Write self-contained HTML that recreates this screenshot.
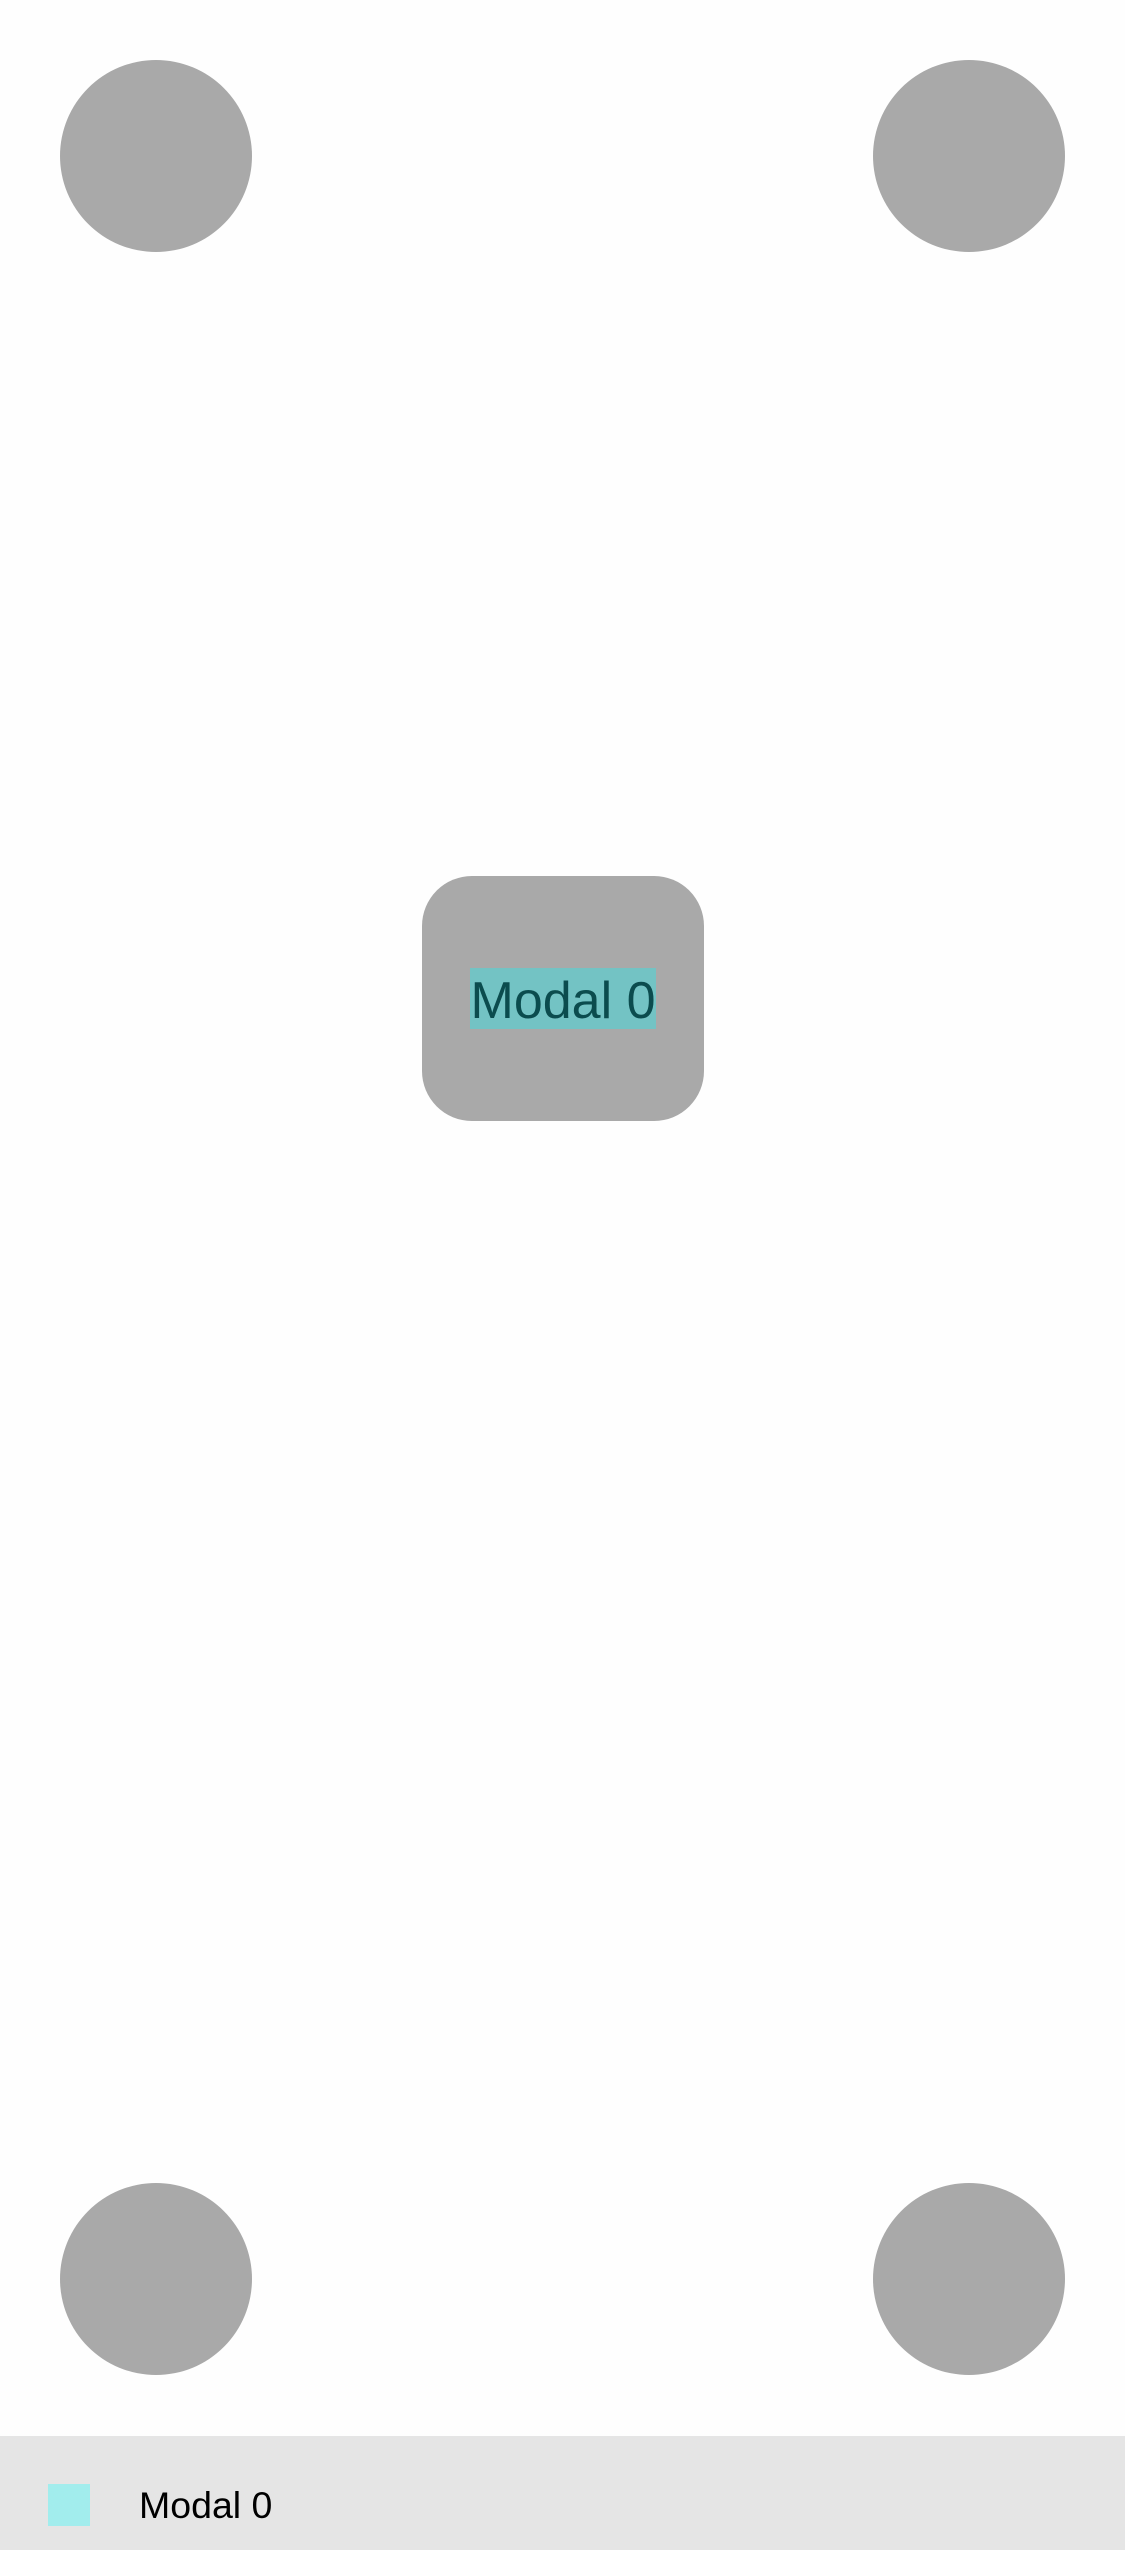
<!DOCTYPE html>
<html><head><meta charset="utf-8"><style>
html,body{margin:0;padding:0;}
body{width:1125px;height:2550px;background:#fefefe;position:relative;overflow:hidden;font-family:"Liberation Sans","DejaVu Sans",sans-serif;}
.c{position:absolute;width:192px;height:192px;border-radius:50%;background:#a9a9a9;}
.modal{position:absolute;left:422px;top:876px;width:282px;height:245px;border-radius:50px;background:#a9a9a9;}
.hl{position:absolute;left:470px;top:968px;width:186px;height:61px;background:#73c3c4;}
.mt{position:absolute;left:470px;top:971px;width:186px;height:61px;line-height:61px;text-align:center;font-size:52px;color:#0b4c4e;white-space:nowrap;}
.bar{position:absolute;left:0;top:2436px;width:1125px;height:114px;background:#e5e5e5;}
.sq{position:absolute;left:48px;top:2484px;width:42px;height:42px;background:#a2eded;}
.bt{position:absolute;left:139px;top:2484px;line-height:42px;font-size:37.5px;color:#000;white-space:nowrap;}
</style></head><body>
<div class="c" style="left:60px;top:60px"></div>
<div class="c" style="left:873px;top:60px"></div>
<div class="c" style="left:60px;top:2183px"></div>
<div class="c" style="left:873px;top:2183px"></div>
<div class="modal"></div>
<div class="hl"></div>
<div class="mt">Modal 0</div>
<div class="bar"></div>
<div class="sq"></div>
<div class="bt">Modal 0</div>
</body></html>
